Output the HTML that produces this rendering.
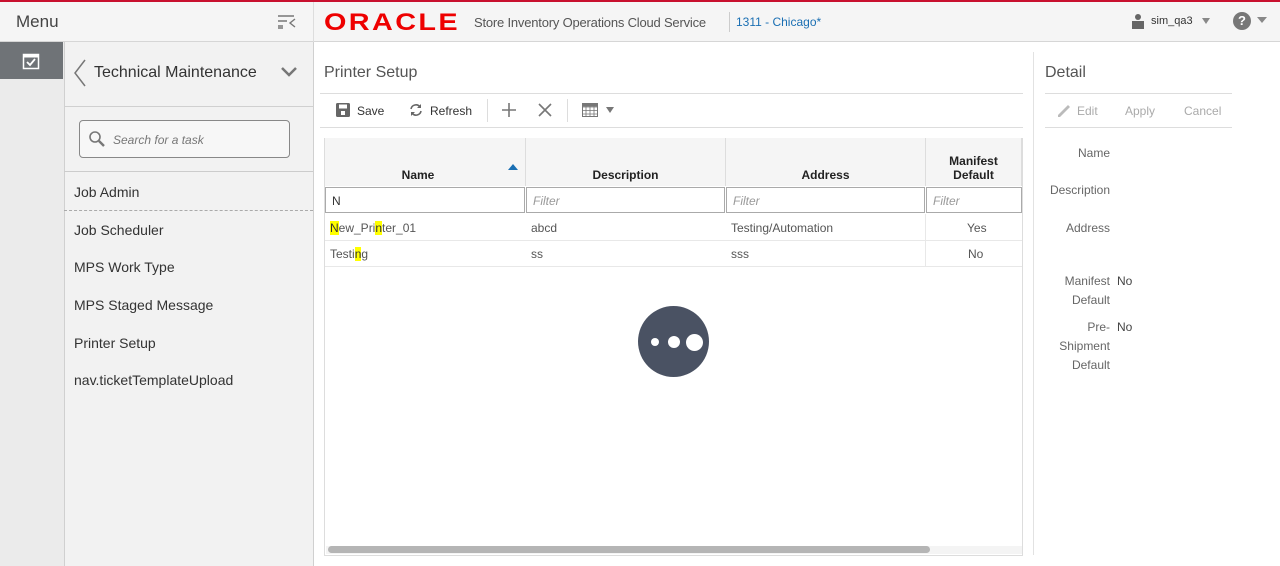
<!DOCTYPE html>
<html><head><style>
*{box-sizing:border-box;margin:0;padding:0}
body{width:1280px;height:566px;overflow:hidden;background:#fff;font-family:"Liberation Sans",sans-serif;color:#333;position:relative}
.a{position:absolute}
.top{left:0;top:0;width:1280px;height:2px;background:#c8102e}
.hdr{left:0;top:2px;width:1280px;height:40px;background:#f5f5f5;border-bottom:1px solid #d6d6d6}
.strip{left:0;top:42px;width:64px;height:524px;background:#ebebeb}
.nav{left:64px;top:42px;width:250px;height:524px;background:#f2f2f2;border-left:1px solid #d0d0d0;border-right:1px solid #d0d0d0}
.navi{left:74px;font-size:14px;color:#333}
.th{top:138px;height:48px;background:#f5f5f5;border-right:1px solid #ddd;font-size:12px;font-weight:bold;text-align:center;color:#222}
.f{top:187px;height:26px;border:1px solid #aaa;font-size:12px;font-style:italic;color:#999;padding:6px 6px}
.c{font-size:12px;color:#555}
.hl{background:#ff0;color:#333}
.lbl{font-size:12px;color:#666;text-align:right;width:80px;left:1030px;line-height:19px}
</style></head><body>
<div class="a top"></div>
<div class="a hdr"></div>
<div class="a" style="left:16px;top:12px;font-size:17px;color:#444">Menu</div>
<svg class="a" style="left:277px;top:14px" width="20" height="16"><path d="M1 2h16M1 7h9M1 12h5M1 14h5" stroke="#777" stroke-width="1.6"/><path d="M18 5l-5 4 5 4" stroke="#777" stroke-width="1.4" fill="none"/></svg>
<div class="a" style="left:313px;top:2px;width:1px;height:40px;background:#ddd"></div>
<div class="a" style="left:324px;top:9px;font-size:24px;font-weight:bold;color:#e00;letter-spacing:2px;transform:scaleX(1.2);transform-origin:left">ORACLE</div>
<div class="a" style="left:474px;top:15px;font-size:13px;color:#555;letter-spacing:-0.2px">Store Inventory Operations Cloud Service</div>
<div class="a" style="left:729px;top:12px;width:1px;height:20px;background:#ccc"></div>
<div class="a" style="left:736px;top:15px;font-size:12px;color:#1a6fb3">1311 - Chicago*</div>
<svg class="a" style="left:1131px;top:13px" width="14" height="16"><circle cx="7" cy="4" r="3" fill="#666"/><rect x="1" y="8" width="12" height="8" fill="#666"/></svg>
<div class="a" style="left:1151px;top:15px;font-size:11px;color:#333">sim_qa3</div>
<div class="a" style="left:1202px;top:18px;border:4px solid transparent;border-top:6px solid #888"></div>
<div class="a" style="left:1233px;top:12px;width:18px;height:18px;border-radius:50%;background:#777;color:#fff;font-size:13px;font-weight:bold;text-align:center;line-height:18px">?</div>
<div class="a" style="left:1257px;top:17px;border:5px solid transparent;border-top:6px solid #888"></div>

<div class="a strip"></div>
<div class="a" style="left:0;top:42px;width:63px;height:37px;background:#6f7377"></div>
<svg class="a" style="left:22px;top:52px" width="18" height="18"><rect x="1.5" y="2.5" width="15" height="14" fill="none" stroke="#fff" stroke-width="1.5"/><rect x="1.5" y="2.5" width="15" height="3" fill="#fff"/><path d="M5 10l3 3 5-6" stroke="#fff" stroke-width="1.8" fill="none"/></svg>
<div class="a nav"></div>
<svg class="a" style="left:73px;top:59px" width="14" height="28"><path d="M12 1L2 14l10 13" stroke="#777" stroke-width="1.5" fill="none"/></svg>
<div class="a" style="left:94px;top:64px;font-size:16px;color:#333">Technical Maintenance</div>
<svg class="a" style="left:280px;top:66px" width="18" height="12"><path d="M2 2l7 7 7-7" stroke="#777" stroke-width="2.5" fill="none"/></svg>
<div class="a" style="left:64px;top:106px;width:249px;height:1px;background:#d0d0d0"></div>
<div class="a" style="left:79px;top:120px;width:211px;height:38px;border:1px solid #888;border-radius:4px;background:#f7f7f7"></div>
<svg class="a" style="left:88px;top:130px" width="18" height="18"><circle cx="7" cy="7" r="5" stroke="#777" stroke-width="1.6" fill="none"/><path d="M11 11l5 5" stroke="#777" stroke-width="2.4"/></svg>
<div class="a" style="left:113px;top:133px;font-size:12px;font-style:italic;color:#777">Search for a task</div>
<div class="a" style="left:64px;top:171px;width:249px;height:1px;background:#ccc"></div>
<div class="a navi" style="top:184px">Job Admin</div>
<div class="a" style="left:64px;top:210px;width:249px;border-top:1px dashed #aaa"></div>
<div class="a navi" style="top:222px">Job Scheduler</div>
<div class="a navi" style="top:259px">MPS Work Type</div>
<div class="a navi" style="top:297px">MPS Staged Message</div>
<div class="a navi" style="top:335px">Printer Setup</div>
<div class="a navi" style="top:372px">nav.ticketTemplateUpload</div>

<div class="a" style="left:324px;top:64px;font-size:16px;color:#555">Printer Setup</div>
<div class="a" style="left:320px;top:93px;width:703px;height:1px;background:#ddd"></div>
<svg class="a" style="left:336px;top:103px" width="14" height="14"><rect x="0" y="0" width="14" height="14" rx="1.5" fill="#666"/><rect x="3" y="1.5" width="8" height="4" fill="#fff"/><rect x="5" y="8" width="4" height="4" fill="#fff"/></svg>
<div class="a" style="left:357px;top:104px;font-size:12px">Save</div>
<svg class="a" style="left:408px;top:102px" width="16" height="16"><path d="M3 7a5 5 0 0 1 9-2M13 9a5 5 0 0 1-9 2" stroke="#666" stroke-width="1.6" fill="none"/><path d="M13 2v4h-4zM3 14v-4h4z" fill="#666"/></svg>
<div class="a" style="left:430px;top:104px;font-size:12px">Refresh</div>
<div class="a" style="left:487px;top:99px;width:1px;height:23px;background:#ddd"></div>
<svg class="a" style="left:501px;top:102px" width="16" height="16"><path d="M8 1v14M1 8h14" stroke="#777" stroke-width="1.6"/></svg>
<svg class="a" style="left:538px;top:103px" width="14" height="14"><path d="M1 1l12 12M13 1L1 13" stroke="#777" stroke-width="1.6"/></svg>
<div class="a" style="left:567px;top:99px;width:1px;height:23px;background:#ddd"></div>
<svg class="a" style="left:582px;top:103px" width="16" height="14"><rect x="0.5" y="0.5" width="15" height="13" fill="none" stroke="#777"/><path d="M0 4h16M0 7.5h16M0 11h16M4 0v14M8 0v14M12 0v14" stroke="#777" stroke-width="0.8"/><rect x="0" y="0" width="16" height="3.5" fill="#777"/></svg>
<div class="a" style="left:606px;top:107px;border:4px solid transparent;border-top:6px solid #777"></div>
<div class="a" style="left:320px;top:127px;width:703px;height:1px;background:#ddd"></div>

<div class="a" style="left:324px;top:138px;width:699px;height:418px;border:1px solid #ddd"></div>
<div class="a th" style="left:325px;width:201px;padding-top:30px;padding-right:14px">Name</div>
<div class="a" style="left:508px;top:164px;border:5px solid transparent;border-bottom:6px solid #1a6fb3;border-top:0"></div>
<div class="a th" style="left:526px;width:200px;padding-top:30px">Description</div>
<div class="a th" style="left:726px;width:200px;padding-top:30px">Address</div>
<div class="a th" style="left:926px;width:96px;padding-top:16px;line-height:14px">Manifest<br>Default</div>
<div class="a f" style="left:325px;width:200px;font-style:normal;color:#333">N</div>
<div class="a f" style="left:526px;width:199px">Filter</div>
<div class="a f" style="left:726px;width:199px">Filter</div>
<div class="a f" style="left:926px;width:96px">Filter</div>
<div class="a" style="left:325px;top:240px;width:697px;height:1px;background:#e8e8e8"></div>
<div class="a" style="left:325px;top:266px;width:697px;height:1px;background:#e8e8e8"></div>
<div class="a" style="left:925px;top:214px;width:1px;height:52px;background:#e8e8e8"></div>
<div class="a c" style="left:330px;top:221px"><span class="hl">N</span>ew_Pri<span class="hl">n</span>ter_01</div>
<div class="a c" style="left:531px;top:221px">abcd</div>
<div class="a c" style="left:731px;top:221px">Testing/Automation</div>
<div class="a c" style="left:967px;top:221px">Yes</div>
<div class="a c" style="left:330px;top:247px">Testi<span class="hl">n</span>g</div>
<div class="a c" style="left:531px;top:247px">ss</div>
<div class="a c" style="left:731px;top:247px">sss</div>
<div class="a c" style="left:968px;top:247px">No</div>
<div class="a" style="left:326px;top:546px;width:696px;height:8px;background:#f4f4f4"></div>
<div class="a" style="left:328px;top:546px;width:602px;height:7px;border-radius:4px;background:#b5b5b5"></div>
<div class="a" style="left:638px;top:306px;width:71px;height:71px;border-radius:50%;background:#4a5263"></div>
<div class="a" style="left:651px;top:338px;width:8px;height:8px;border-radius:50%;background:#fff"></div>
<div class="a" style="left:668px;top:336px;width:12px;height:12px;border-radius:50%;background:#fff"></div>
<div class="a" style="left:686px;top:334px;width:17px;height:17px;border-radius:50%;background:#fff"></div>

<div class="a" style="left:1033px;top:52px;width:1px;height:503px;background:#e2e2e2"></div>
<div class="a" style="left:1045px;top:64px;font-size:16px;color:#555">Detail</div>
<div class="a" style="left:1045px;top:93px;width:187px;height:1px;background:#ddd"></div>
<svg class="a" style="left:1056px;top:103px" width="16" height="14"><path d="M2 12l10-10 2 2-10 10H2z" fill="#bbb"/></svg>
<div class="a" style="left:1077px;top:104px;font-size:12px;color:#aaa">Edit</div>
<div class="a" style="left:1125px;top:104px;font-size:12px;color:#aaa">Apply</div>
<div class="a" style="left:1184px;top:104px;font-size:12px;color:#aaa">Cancel</div>
<div class="a" style="left:1045px;top:127px;width:187px;height:1px;background:#ddd"></div>
<div class="a lbl" style="top:144px">Name</div>
<div class="a lbl" style="top:181px">Description</div>
<div class="a lbl" style="top:219px">Address</div>
<div class="a lbl" style="top:272px">Manifest<br>Default</div>
<div class="a" style="left:1117px;top:274px;font-size:12px;color:#444">No</div>
<div class="a lbl" style="top:318px">Pre-<br>Shipment<br>Default</div>
<div class="a" style="left:1117px;top:320px;font-size:12px;color:#444">No</div>
</body></html>
